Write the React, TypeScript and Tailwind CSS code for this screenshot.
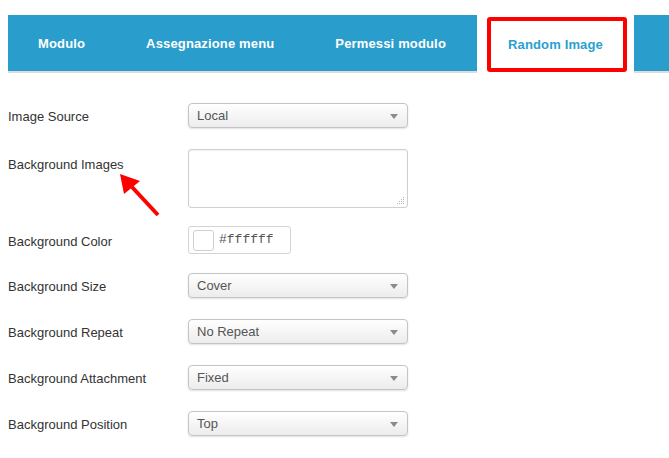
import React from "react";

const tabs = ["Modulo", "Assegnazione menu", "Permessi modulo"];

function Select({ value }: { value: string }) {
  return (
    <div className="relative flex h-[25px] w-[220px] items-center rounded-[4px] border border-[#c4c4c4] bg-gradient-to-b from-white to-[#ececec] pl-2 text-[13px] text-[#555] shadow-[0_1px_2px_rgba(0,0,0,0.12)]">
      {value}
      <span className="absolute right-[9px] top-[10px] h-0 w-0 border-x-[4px] border-t-[5px] border-x-transparent border-t-[#8a8a8a]" />
    </div>
  );
}

function Row({ label, children, top }: { label: string; children: React.ReactNode; top?: boolean }) {
  return (
    <div className={`flex ${top ? "items-start" : "items-center"}`}>
      <div className={`w-[180px] text-[13px] text-[#333] ${top ? "pt-[6px]" : "pt-[3px]"}`}>{label}</div>
      {children}
    </div>
  );
}

export default function App() {
  return (
    <div className="relative h-[458px] w-[669px] overflow-hidden bg-white pl-2 pt-[15px] font-['Liberation_Sans',Arial,sans-serif]">
      {/* tab strip */}
      <div className="flex h-[58px]">
        {tabs.map((t) => (
          <div
            key={t}
            className="flex items-center border-b-2 border-[#dcdcdc] bg-[#299dcc] pl-[30px] pr-[31px] pt-[1px] text-[13px] font-bold tracking-[0.15px] text-white"
          >
            {t}
          </div>
        ))}
        <div className="flex items-center bg-white px-[31px] pt-[1px] text-[13px] font-bold tracking-[0.15px] text-[#2a9fd0]">
          Random Image
        </div>
        <div className="flex-1 border-b-2 border-[#dcdcdc] bg-[#299dcc]" />
      </div>

      {/* annotation box */}
      <div className="absolute left-[487px] top-[17px] h-[55px] w-[140px] rounded-[3px] border-4 border-[#ff0000]" />

      {/* form */}
      <div className="mt-[30px] flex flex-col">
        <Row label="Image Source">
          <Select value="Local" />
        </Row>
        <div className="mt-[21px]">
          <Row label="Background Images" top>
            <div className="relative h-[59px] w-[220px] rounded-[3px] border border-[#cfcfcf] bg-white shadow-[inset_0_1px_2px_rgba(0,0,0,0.06)]">
              <svg className="absolute bottom-[2px] right-[2px]" width="8" height="8" viewBox="0 0 8 8">
                <g fill="#b5b5b5">
                  <rect x="6" y="0" width="1" height="1" />
                  <rect x="4" y="2" width="1" height="1" />
                  <rect x="6" y="2" width="1" height="1" />
                  <rect x="2" y="4" width="1" height="1" />
                  <rect x="4" y="4" width="1" height="1" />
                  <rect x="6" y="4" width="1" height="1" />
                  <rect x="0" y="6" width="1" height="1" />
                  <rect x="2" y="6" width="1" height="1" />
                  <rect x="4" y="6" width="1" height="1" />
                  <rect x="6" y="6" width="1" height="1" />
                </g>
              </svg>
            </div>
          </Row>
        </div>
        <div className="mt-[18px]">
          <Row label="Background Color">
            <div className="flex h-[28px] w-[103px] items-center gap-[5px] rounded-[3px] border border-[#d4d4d4] bg-white px-[4px]">
              <div className="h-[21px] w-[21px] rounded-[3px] border border-[#cfcfcf] bg-white" />
              <span className="font-['Liberation_Mono',monospace] text-[13px] text-[#555]">#ffffff</span>
            </div>
          </Row>
        </div>
        <div className="mt-[19px]">
          <Row label="Background Size">
            <Select value="Cover" />
          </Row>
        </div>
        <div className="mt-[21px]">
          <Row label="Background Repeat">
            <Select value="No Repeat" />
          </Row>
        </div>
        <div className="mt-[21px]">
          <Row label="Background Attachment">
            <Select value="Fixed" />
          </Row>
        </div>
        <div className="mt-[21px]">
          <Row label="Background Position">
            <Select value="Top" />
          </Row>
        </div>
      </div>

      {/* annotation arrow */}
      <svg className="absolute left-[110px] top-[165px]" width="60" height="60" viewBox="0 0 60 60">
        <line x1="48" y1="50" x2="22" y2="22" stroke="#ff0000" strokeWidth="4" />
        <polygon points="10,9 14,29 30,16" fill="#ff0000" />
      </svg>
    </div>
  );
}
